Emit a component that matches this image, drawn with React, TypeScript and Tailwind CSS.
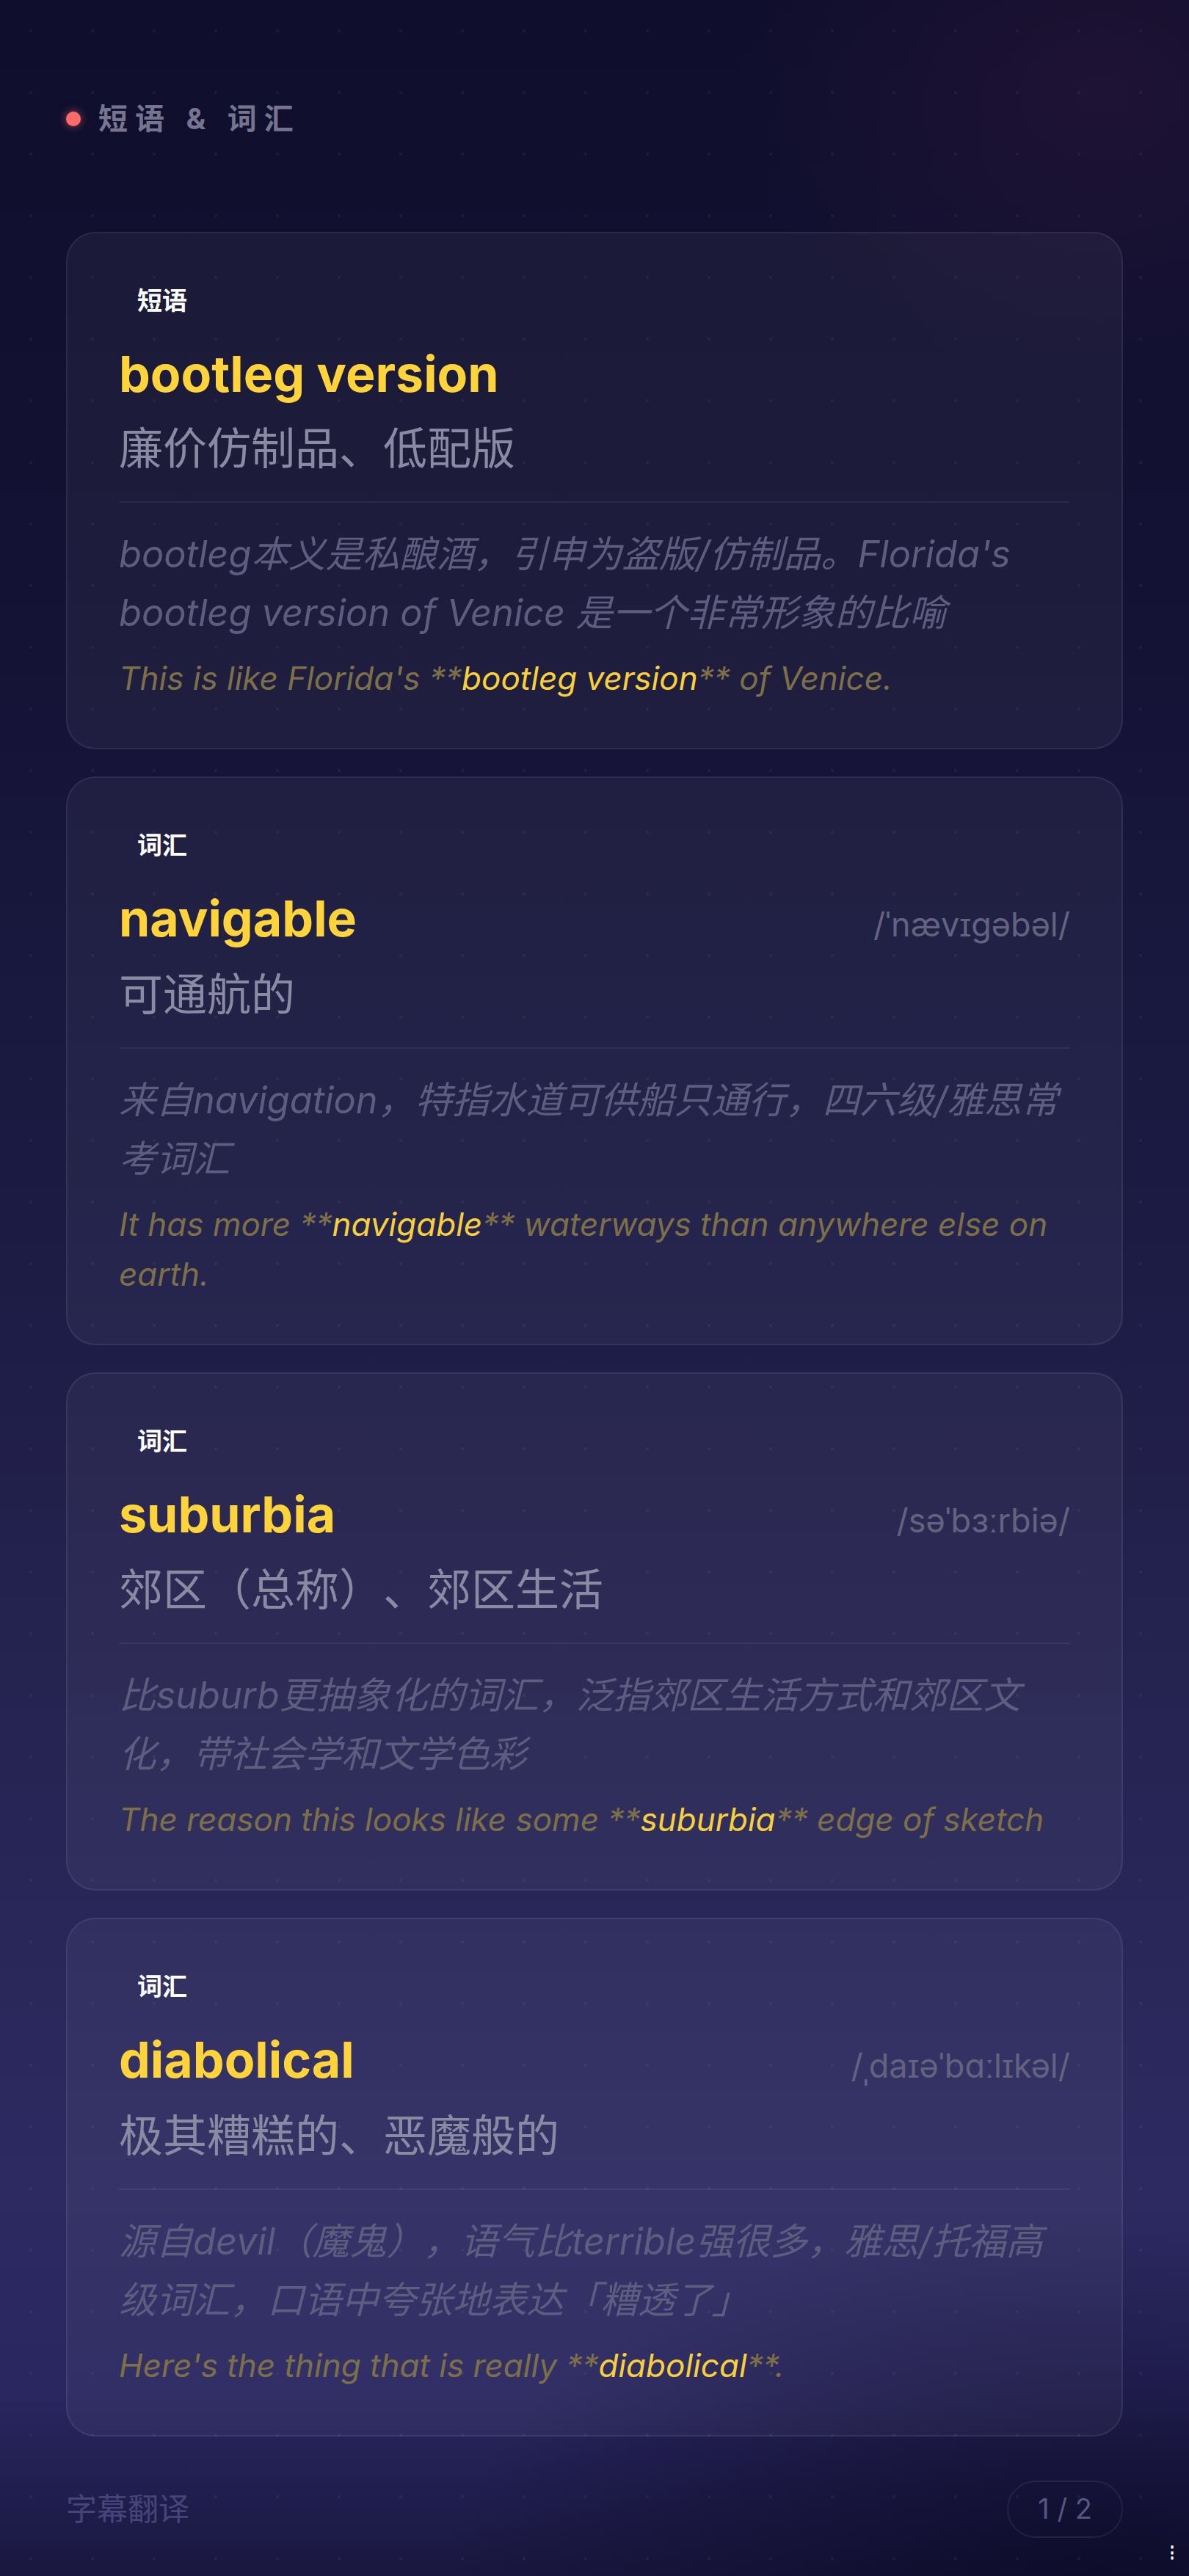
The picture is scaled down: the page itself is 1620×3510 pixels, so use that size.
import React from 'react';

// vocabulary cards shown on the subtitle screen
const items = [
    {
        id: 1,
        tag: '短语',
        word: 'bootleg version',
        phonetic: '',
        meaning: '廉价仿制品、低配版',
        note: "bootleg本义是私酿酒，引申为盗版/仿制品。Florida's bootleg version of Venice 是一个非常形象的比喻",
        before: "This is like Florida's **",
        hit: 'bootleg version',
        after: '** of Venice.'
    },
    {
        id: 2,
        tag: '词汇',
        word: 'navigable',
        phonetic: '/ˈnævɪɡəbəl/',
        meaning: '可通航的',
        note: '来自navigation，特指水道可供船只通行，四六级/雅思常考词汇',
        before: 'It has more **',
        hit: 'navigable',
        after: '** waterways than anywhere else on earth.'
    },
    {
        id: 3,
        tag: '词汇',
        word: 'suburbia',
        phonetic: '/səˈbɜːrbiə/',
        meaning: '郊区（总称）、郊区生活',
        note: '比suburb更抽象化的词汇，泛指郊区生活方式和郊区文化，带社会学和文学色彩',
        before: 'The reason this looks like some **',
        hit: 'suburbia',
        after: '** edge of sketch'
    },
    {
        id: 4,
        tag: '词汇',
        word: 'diabolical',
        phonetic: '/ˌdaɪəˈbɑːlɪkəl/',
        meaning: '极其糟糕的、恶魔般的',
        note: '源自devil（魔鬼），语气比terrible强很多，雅思/托福高级词汇，口语中夸张地表达「糟透了」',
        before: "Here's the thing that is really **",
        hit: 'diabolical',
        after: '**.'
    }
];

export default function App() {
    return (
        <div className="relative w-full min-h-[3510px] overflow-hidden bg-[linear-gradient(180deg,#0f0e2c_0%,#131234_22%,#1b1a42_45%,#252350_65%,#2d2a62_85%,#292660_93%,#19173f_100%)] font-['Inter','Noto_Sans_CJK_SC',sans-serif] [text-spacing-trim:space-all]">
            {/* glows + dot grid */}
            <div className="pointer-events-none absolute inset-0 bg-[radial-gradient(ellipse_500px_400px_at_1500px_120px,rgba(110,40,90,0.16),transparent)]" />
            <div className="pointer-events-none absolute inset-0 bg-[radial-gradient(ellipse_900px_500px_at_1500px_3520px,rgba(10,8,35,0.75),transparent)]" />
            <div className="pointer-events-none absolute inset-0 bg-[radial-gradient(circle,rgba(255,255,255,0.05)_1.5px,transparent_2.5px)] bg-[length:84px_84px]" />

            <div className="relative flex flex-col px-[90px] pt-[134px]">
                {/* Header */}
                <div className="flex h-[56px] items-center gap-[24px]">
                    <span className="h-[20px] w-[20px] rounded-full bg-[#ff6b6b] shadow-[0_0_12px_rgba(255,107,107,0.6)]" />
                    <span className="text-[40px] font-bold leading-[56px] tracking-[10px] text-[#76748f]">短语 & 词汇</span>
                </div>

                {/* Cards */}
                <div className="mt-[126px] flex flex-col gap-[37px]">
                    {items.map((item) => (
                        <div key={item.id} className="flex flex-col rounded-[40px] border-2 border-white/[0.07] bg-white/[0.045] px-[70px] pt-[62px] pb-[61px]">
                            <div className="self-start px-[25px] py-[8px] text-[34px] font-bold leading-[44px] text-white">
                                {item.tag}
                            </div>
                            <div className="mt-[28px] flex items-baseline justify-between">
                                <h2 className="text-[68px] font-bold leading-[82px] text-[#ffd43b]">{item.word}</h2>
                                {item.phonetic && (
                                    <span className="text-[45px] text-[#64637f]">{item.phonetic}</span>
                                )}
                            </div>
                            <p className="mt-[24px] text-[60px] leading-[75px] text-[#8a8aa3]">{item.meaning}</p>
                            <div className="mt-[34px] h-[2px] bg-white/[0.06]" />
                            <p className="mt-[30px] text-[50.5px] italic leading-[80px] text-[#5e5d80]">{item.note}</p>
                            <p className="mt-[15px] text-[44px] italic leading-[68px] text-[#7d7049]">
                                {item.before}
                                <span className="text-[#f7d03c]">{item.hit}</span>
                                {item.after}
                            </p>
                        </div>
                    ))}
                </div>

                {/* Footer */}
                <div className="mt-[60px] flex h-[78px] items-center justify-between">
                    <span className="text-[42px] text-[#46457a]">字幕翻译</span>
                    <span className="flex h-[78px] items-center rounded-full border-2 border-white/[0.08] px-[40px] text-[38px] text-[#575680]">1 / 2</span>
                </div>
            </div>

            <span className="absolute bottom-[22px] right-[12px] text-[22px] font-bold leading-none text-white">⋮</span>
        </div>
    );
}
